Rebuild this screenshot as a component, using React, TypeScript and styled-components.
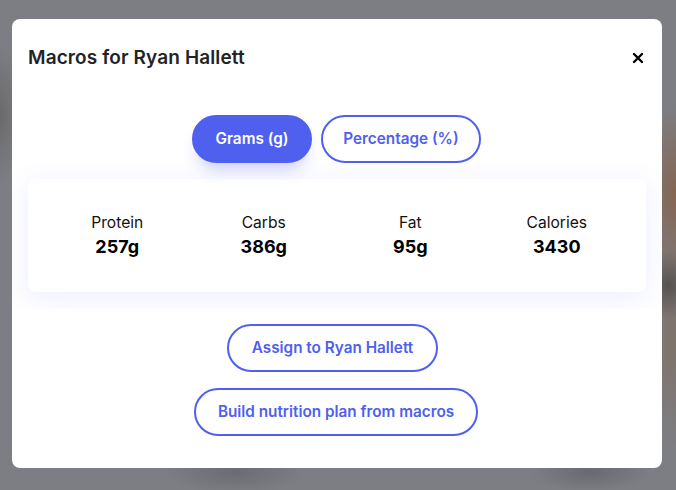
import React from "react";
import styled, { createGlobalStyle } from "styled-components";

const Global = createGlobalStyle`
  html, body { margin: 0; padding: 0; }
  body {
    width: 676px;
    height: 490px;
    overflow: hidden;
    font-family: "Inter", "Lato", "Liberation Sans", sans-serif;
  }
`;

const Backdrop = styled.div`
  box-sizing: border-box;
  width: 676px;
  height: 490px;
  padding: 19px 14px 22px 12px;
  background:
    radial-gradient(ellipse 30px 34px at 668px 285px, #555250 0%, rgba(85,82,80,0) 100%),
    radial-gradient(ellipse 50px 90px at 680px 195px, #86644f 0%, rgba(134,100,79,0) 100%),
    radial-gradient(ellipse 50px 110px at 680px 340px, #7f7269 0%, rgba(127,114,105,0) 100%),
    radial-gradient(ellipse 70px 22px at 235px 472px, #6a6c72 0%, rgba(106,108,114,0) 100%),
    radial-gradient(ellipse 60px 20px at 590px 472px, #686a70 0%, rgba(104,106,112,0) 100%),
    radial-gradient(ellipse 22px 70px at 0px 115px, #6a6a6b 0%, rgba(106,106,107,0) 100%),
    #7d7e83;
`;

const Modal = styled.div`
  height: 449px;
  box-sizing: border-box;
  background: #fff;
  border-radius: 8px;
  padding-top: 27px;
`;

const Header = styled.header`
  display: flex;
  align-items: center;
  justify-content: space-between;
  height: 24px;
  padding: 0 12px 0 16px;
`;

const Title = styled.h2`
  margin: 0;
  font-size: 19px;
  line-height: 24px;
  font-weight: 600;
  letter-spacing: 0.12px;
  color: #222326;
`;

const Close = styled.button`
  display: flex;
  padding: 0;
  border: 0;
  background: none;
  color: #000;
`;

const Toggle = styled.div`
  display: flex;
  justify-content: center;
  gap: 9px;
  margin: 45px 1px 0 0;
`;

const Pill = styled.button<{ $w: number; $active?: boolean; $shift?: number }>`
  box-sizing: border-box;
  width: ${(p) => p.$w}px;
  height: 48px;
  padding: 0 0 2px;
  margin-right: ${(p) => p.$shift ?? 0}px;
  border: 2px solid #4f60ef;
  border-radius: 24px;
  font-family: inherit;
  font-size: 15.3px;
  font-weight: 600;
  color: ${(p) => (p.$active ? "#fff" : "#4f60ef")};
  background: ${(p) => (p.$active ? "#4f60ef" : "#fff")};
  box-shadow: ${(p) => (p.$active ? "0 12px 16px -6px rgba(79,96,239,0.3)" : "none")};
`;

const Clip = styled.div`
  overflow: hidden;
  padding: 16px;
`;

const Card = styled.div`
  display: grid;
  grid-template-columns: repeat(4, 1fr);
  align-items: center;
  height: 113px;
  padding: 0 16px;
  box-sizing: border-box;
  background: #fff;
  border-radius: 8px;
  box-shadow: 0 6px 30px rgba(79, 96, 239, 0.11);
`;

const Stat = styled.div`
  display: flex;
  flex-direction: column;
  align-items: center;
  gap: 3px;
  padding-top: 1px;
`;

const Label = styled.span`
  font-size: 15.6px;
  line-height: 18px;
  color: #111;
`;

const Value = styled.span`
  font-size: 18px;
  line-height: 24px;
  font-weight: 700;
  color: #000;
`;

const Actions = styled.div`
  display: flex;
  flex-direction: column;
  align-items: center;
  gap: 16px;
  margin-top: 16px;
`;

const stats = [
  ["Protein", "257g"],
  ["Carbs", "386g"],
  ["Fat", "95g"],
  ["Calories", "3430"],
];

export default function App() {
  return (
    <>
      <Global />
      <Backdrop>
        <Modal>
          <Header>
            <Title>Macros for Ryan Hallett</Title>
            <Close aria-label="Close">
              <svg width="24" height="24" viewBox="0 0 24 24" fill="none" stroke="currentColor" strokeWidth="2.4" strokeLinecap="round">
                <path d="M8 8l8 8M16 8l-8 8" />
              </svg>
            </Close>
          </Header>
          <Toggle>
            <Pill $w={120} $active>Grams (g)</Pill>
            <Pill $w={160}>Percentage (%)</Pill>
          </Toggle>
          <Clip>
            <Card>
              {stats.map(([l, v]) => (
                <Stat key={l}>
                  <Label>{l}</Label>
                  <Value>{v}</Value>
                </Stat>
              ))}
            </Card>
          </Clip>
          <Actions>
            <Pill $w={211} $shift={9}>Assign to Ryan Hallett</Pill>
            <Pill $w={284} $shift={2}>Build nutrition plan from macros</Pill>
          </Actions>
        </Modal>
      </Backdrop>
    </>
  );
}
